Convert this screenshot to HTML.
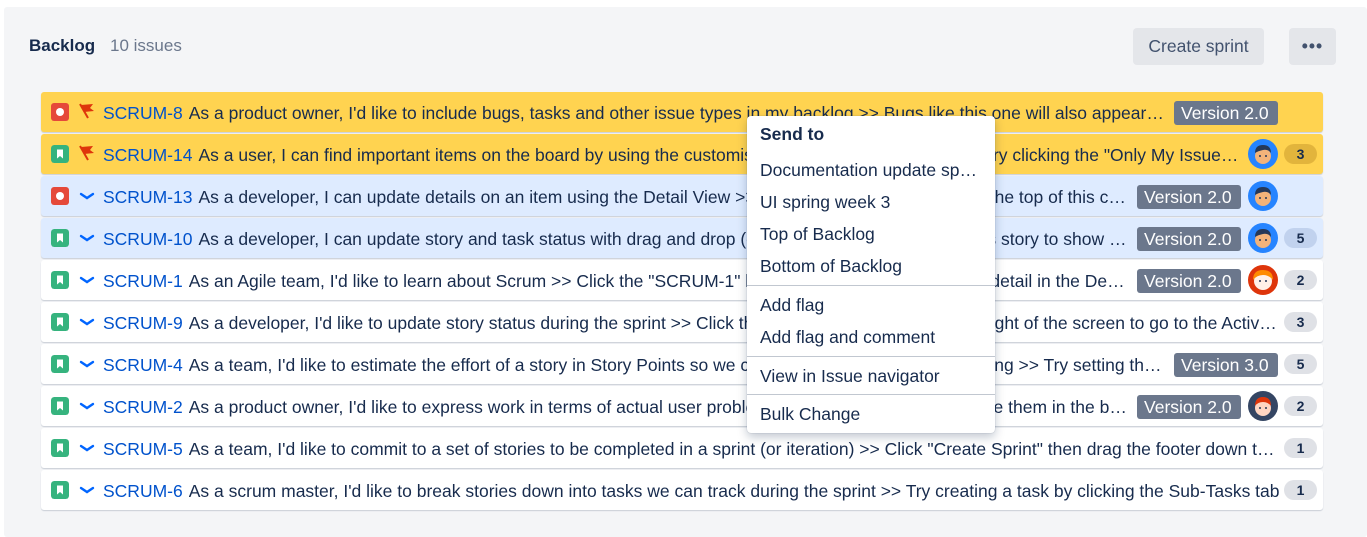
<!DOCTYPE html>
<html><head><meta charset="utf-8"><style>
*{box-sizing:border-box;margin:0;padding:0}
body{width:1367px;height:529px;background:#fff;font-family:"Liberation Sans",sans-serif;color:#172b4d;overflow:hidden;position:relative}
.panel{position:absolute;left:4px;top:7px;width:1363px;height:530px;background:#f4f5f7;border-radius:3px}
.title{position:absolute;left:29px;top:36px;font-size:17px;font-weight:bold}
.cnt{position:absolute;left:110px;top:36px;font-size:17px;color:#6b778c}
.btn{position:absolute;top:28px;height:37px;background:#e4e6ea;border-radius:4px;font-size:17.5px;color:#42526e;display:flex;align-items:center;justify-content:center}
.row{position:absolute;left:41px;width:1282px;height:40px;background:#fff;border-radius:3px;box-shadow:0 1px 1px #c9ced6;font-size:17.5px}
.y{background:#ffd350}.b{background:#deebff}
.ti{position:absolute;left:10px;top:11px;width:18px;height:18px;border-radius:3px}
.bug{background:#e5493a}.bug:after{content:"";position:absolute;left:5px;top:5px;width:8px;height:8px;border-radius:50%;background:#fff}
.pi{position:absolute;left:37px;top:11px}
.ln{position:absolute;left:62px;top:10px;display:flex;white-space:nowrap;line-height:22px}
.key{color:#0052cc;margin-right:6px;flex:none}
.sum{overflow:hidden;text-overflow:ellipsis;flex:1;min-width:0}
.loz{position:absolute;top:9px;height:24px;background:#6b778c;color:#fff;border-radius:3px;font-size:17.5px;line-height:24px;padding:0 7px;width:104px;white-space:nowrap}
.av{position:absolute;left:1207px;top:5px;width:30px;height:30px}
.bd{position:absolute;left:1243px;top:10px;width:33px;height:20px;border-radius:10px;background:#dfe1e6;font-size:14px;font-weight:bold;text-align:center;line-height:20px;color:#172b4d}
.y .bd{background:#e2b43c}.b .bd{background:#c1d2ee}
.menu{position:absolute;left:747px;top:116px;width:248px;height:317px;background:#fff;border-radius:4px;box-shadow:0 4px 10px rgba(9,30,66,.25),0 0 1px rgba(9,30,66,.3);font-size:17.5px}
.mi{position:absolute;left:13px;white-space:nowrap}
.sep{position:absolute;left:0;right:0;height:1px;background:#c1c7d0}
</style></head><body>
<div class="panel"></div>
<div class="title">Backlog</div><div class="cnt">10 issues</div>
<div class="btn" style="left:1133px;width:131px">Create sprint</div>
<div class="btn" style="left:1289px;width:47px;font-weight:bold;letter-spacing:1px">•••</div>

<svg width="0" height="0" style="position:absolute"><defs>
<g id="bm"><rect width="18" height="18" rx="3" fill="#36b37e"/><path d="M6 4.5h6v9l-3-2.5-3 2.5z" fill="#fff"/></g>
<g id="fl"><path d="M2 1l8 14" stroke="#de350b" stroke-width="2"/><path d="M3 2l12-1-3 4 4 3-10 1z" fill="#de350b"/></g>
<g id="ch"><path d="M3 7l6 4 6-4" stroke="#0065ff" stroke-width="2.4" fill="none" stroke-linecap="round"/></g>
<g id="ab"><circle cx="15" cy="15" r="15" fill="#2684ff"/><circle cx="15" cy="17" r="8" fill="#f3b37a"/><path d="M7 14q0-8 8-8t8 8q-3-4-8-3t-8 3z" fill="#253858"/><circle cx="12" cy="17" r="1" fill="#253858"/><circle cx="18" cy="17" r="1" fill="#253858"/></g>
<g id="ar"><circle cx="15" cy="15" r="15" fill="#de350b"/><circle cx="15" cy="16" r="9" fill="#fff0e8"/><path d="M5 15q0-10 10-10t10 10q-4-5-10-5t-10 5z" fill="#ff8b00"/><circle cx="12" cy="16" r="1" fill="#253858"/><circle cx="18" cy="16" r="1" fill="#253858"/></g>
<g id="ad"><circle cx="15" cy="15" r="15" fill="#344563"/><circle cx="15" cy="17" r="8" fill="#ffd5c2"/><path d="M7 15q0-9 8-9t8 9q-3-4-8-4t-8 4z" fill="#de350b"/><circle cx="12" cy="17" r="1" fill="#253858"/><circle cx="18" cy="17" r="1" fill="#253858"/></g>
</defs></svg>

<div class="row y" style="top:92px"><div class="ti bug"></div><svg class="pi" width="18" height="18"><use href="#fl"/></svg><div class="ln" style="width:1065px"><span class="key">SCRUM-8</span><span class="sum">As a product owner, I'd like to include bugs, tasks and other issue types in my backlog &gt;&gt; Bugs like this one will also appear in your backlog</span></div><span class="loz" style="left:1133px">Version 2.0</span></div>

<div class="row y" style="top:134px"><svg class="ti" width="18" height="18"><use href="#bm"/></svg><svg class="pi" width="18" height="18"><use href="#fl"/></svg><div class="ln" style="width:1140px"><span class="key">SCRUM-14</span><span class="sum">As a user, I can find important items on the board by using the customisable "Quick Filters" above &gt;&gt; Try clicking the "Only My Issues" Quick Filter above</span></div><svg class="av"><use href="#ab"/></svg><span class="bd">3</span></div>

<div class="row b" style="top:176px"><div class="ti bug"></div><svg class="pi" width="18" height="18"><use href="#ch"/></svg><div class="ln" style="width:1028px"><span class="key">SCRUM-13</span><span class="sum">As a developer, I can update details on an item using the Detail View &gt;&gt; Click the "SCRUM-13" link at the top of this card to open the detail view</span></div><span class="loz" style="left:1096px">Version 2.0</span><svg class="av"><use href="#ab"/></svg></div>

<div class="row b" style="top:218px"><svg class="ti" width="18" height="18"><use href="#bm"/></svg><svg class="pi" width="18" height="18"><use href="#ch"/></svg><div class="ln" style="width:1028px"><span class="key">SCRUM-10</span><span class="sum">As a developer, I can update story and task status with drag and drop (click the triangle at far left of this story to show sub-tasks)</span></div><span class="loz" style="left:1096px">Version 2.0</span><svg class="av"><use href="#ab"/></svg><span class="bd">5</span></div>

<div class="row" style="top:260px"><svg class="ti" width="18" height="18"><use href="#bm"/></svg><svg class="pi" width="18" height="18"><use href="#ch"/></svg><div class="ln" style="width:1028px"><span class="key">SCRUM-1</span><span class="sum">As an Agile team, I'd like to learn about Scrum &gt;&gt; Click the "SCRUM-1" link at the left of this row to see detail in the Description tab on the right</span></div><span class="loz" style="left:1096px">Version 2.0</span><svg class="av"><use href="#ar"/></svg><span class="bd">2</span></div>

<div class="row" style="top:302px"><svg class="ti" width="18" height="18"><use href="#bm"/></svg><svg class="pi" width="18" height="18"><use href="#ch"/></svg><div class="ln" style="width:1177px"><span class="key">SCRUM-9</span><span class="sum">As a developer, I'd like to update story status during the sprint &gt;&gt; Click the Active sprints link at the top right of the screen to go to the Active sprints</span></div><span class="bd">3</span></div>

<div class="row" style="top:344px"><svg class="ti" width="18" height="18"><use href="#bm"/></svg><svg class="pi" width="18" height="18"><use href="#ch"/></svg><div class="ln" style="width:1065px"><span class="key">SCRUM-4</span><span class="sum">As a team, I'd like to estimate the effort of a story in Story Points so we can understand the work remaining &gt;&gt; Try setting the Story Points</span></div><span class="loz" style="left:1133px">Version 3.0</span><span class="bd">5</span></div>

<div class="row" style="top:386px"><svg class="ti" width="18" height="18"><use href="#bm"/></svg><svg class="pi" width="18" height="18"><use href="#ch"/></svg><div class="ln" style="width:1028px"><span class="key">SCRUM-2</span><span class="sum">As a product owner, I'd like to express work in terms of actual user problems, aka User Stories, and place them in the backlog</span></div><span class="loz" style="left:1096px">Version 2.0</span><svg class="av"><use href="#ad"/></svg><span class="bd">2</span></div>

<div class="row" style="top:428px"><svg class="ti" width="18" height="18"><use href="#bm"/></svg><svg class="pi" width="18" height="18"><use href="#ch"/></svg><div class="ln" style="width:1177px"><span class="key">SCRUM-5</span><span class="sum">As a team, I'd like to commit to a set of stories to be completed in a sprint (or iteration) &gt;&gt; Click "Create Sprint" then drag the footer down to select issues</span></div><span class="bd">1</span></div>

<div class="row" style="top:470px"><svg class="ti" width="18" height="18"><use href="#bm"/></svg><svg class="pi" width="18" height="18"><use href="#ch"/></svg><div class="ln" style="width:1177px"><span class="key">SCRUM-6</span><span class="sum">As a scrum master, I'd like to break stories down into tasks we can track during the sprint &gt;&gt; Try creating a task by clicking the Sub-Tasks tab</span></div><span class="bd">1</span></div>

<div class="menu">
<div class="mi" style="top:8px;font-weight:bold">Send to</div>
<div class="mi" style="top:44px">Documentation update sp…</div>
<div class="mi" style="top:76px">UI spring week 3</div>
<div class="mi" style="top:108px">Top of Backlog</div>
<div class="mi" style="top:140px">Bottom of Backlog</div>
<div class="sep" style="top:169px"></div>
<div class="mi" style="top:179px">Add flag</div>
<div class="mi" style="top:211px">Add flag and comment</div>
<div class="sep" style="top:240px"></div>
<div class="mi" style="top:250px">View in Issue navigator</div>
<div class="sep" style="top:278px"></div>
<div class="mi" style="top:288px">Bulk Change</div>
</div>
</body></html>
